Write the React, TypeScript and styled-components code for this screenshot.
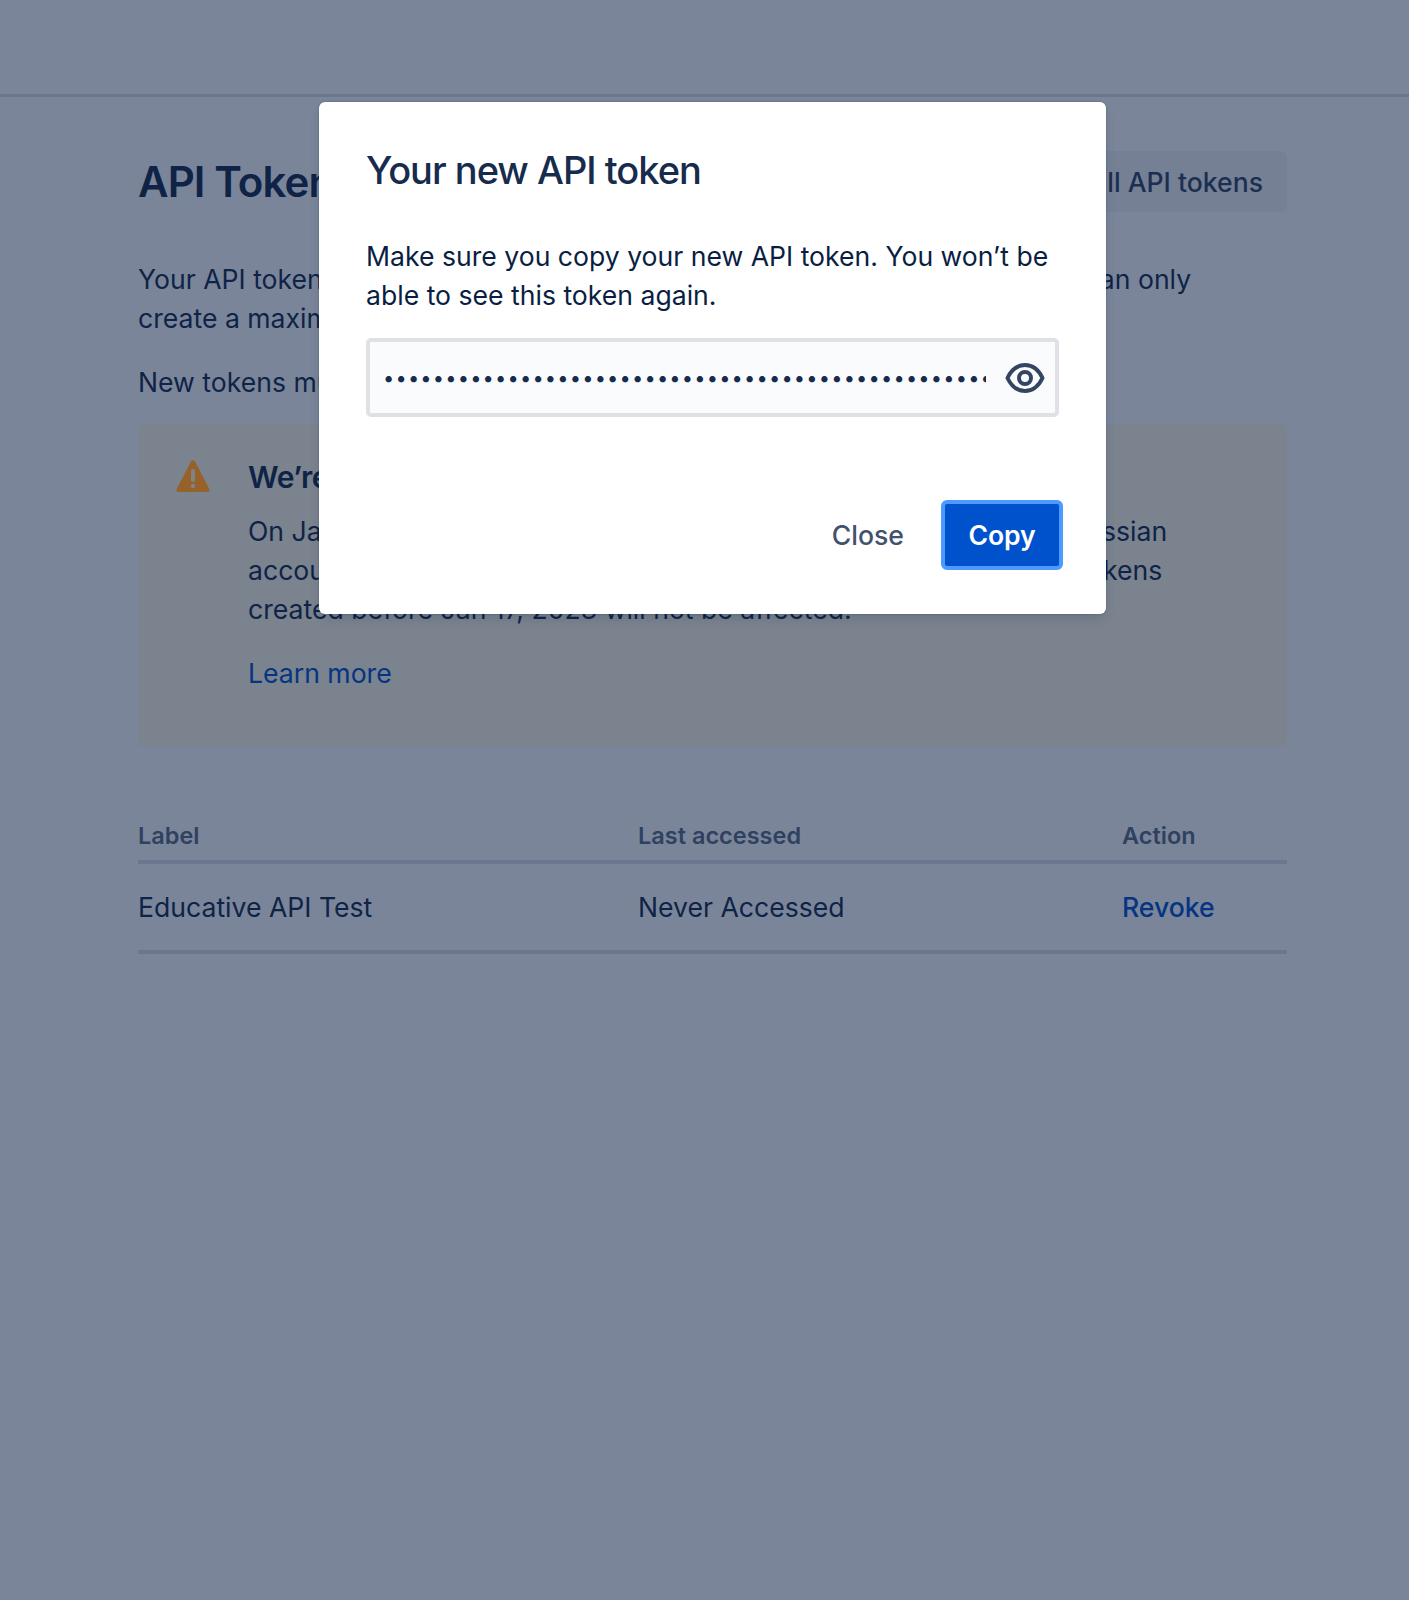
import React from "react";
import styled, { createGlobalStyle } from "styled-components";

const GlobalStyle = createGlobalStyle`
  html, body {
    margin: 0;
    padding: 0;
    background: #fff;
    font-family: Inter, "Liberation Sans", sans-serif;
    color: #172b4d;
  }
  * {
    box-sizing: border-box;
  }
  a {
    text-decoration: none;
  }
`;

const Page = styled.div`
  position: relative;
  width: 1409px;
  height: 1600px;
  overflow: hidden;
`;

const TopBar = styled.header`
  height: 97px;
  border-bottom: 3px solid #dfe1e6;
`;

const Main = styled.main`
  padding: 54px 122px 0 138px;
`;

const TitleRow = styled.div`
  display: flex;
  align-items: center;
  justify-content: space-between;
  height: 61px;
  margin-bottom: 48px;
`;

const Title = styled.h1`
  margin: 0;
  font-size: 42px;
  font-weight: 600;
  letter-spacing: -0.9px;
  color: #172b4d;
`;

const GhostButton = styled.button`
  height: 61px;
  padding: 0 24px;
  border: 0;
  border-radius: 6px;
  background: #f4f5f7;
  color: #344563;
  font: 500 26.6px Inter, "Liberation Sans", sans-serif;
`;

const Text = styled.p`
  margin: 0 0 25px;
  font-size: 26.6px;
  line-height: 39px;
  color: #172b4d;
`;

const Warning = styled.section`
  display: flex;
  gap: 38px;
  height: 323px;
  margin-top: -3px;
  padding: 35px 38px;
  border-radius: 6px;
  background: #fffae6;
`;

const WarningIcon = styled.svg`
  position: relative;
  z-index: 2;
  flex: none;
  width: 34px;
  height: 34px;
`;

const WarningBody = styled.div`
  flex: 1;
`;

const WarningTitle = styled.h2`
  margin: 0 0 17px;
  font-size: 30px;
  line-height: 36px;
  font-weight: 600;
  letter-spacing: -0.4px;
  color: #172b4d;
`;

const LinkText = styled.a<{ $strong?: boolean }>`
  font-size: 26.6px;
  line-height: 39px;
  font-weight: ${props => (props.$strong ? 500 : 400)};
  color: #0052cc;
`;

const Table = styled.div`
  margin-top: 65px;
`;

const Row = styled.div<{ $head?: boolean }>`
  display: grid;
  grid-template-columns: 500px 484px 1fr;
  align-items: center;
  height: ${props => (props.$head ? "52px" : "90px")};
  padding-bottom: ${props => (props.$head ? "2px" : "0")};
  border-bottom: 4px solid #dfe1e6;
  font-size: ${props => (props.$head ? "23.5px" : "26.6px")};
  font-weight: ${props => (props.$head ? 600 : 400)};
  color: ${props => (props.$head ? "#5e6c84" : "#172b4d")};
`;

const Blanket = styled.div`
  position: absolute;
  inset: 0;
  display: flex;
  align-items: flex-start;
  padding: 102px 0 0 319px;
  background: rgba(9, 30, 66, 0.54);
`;

const Modal = styled.div`
  display: flex;
  flex-direction: column;
  width: 787px;
  height: 512px;
  padding: 44px 44px 44px 47px;
  border-radius: 6px;
  background: #fff;
  box-shadow: 0 0 2px rgba(9, 30, 66, 0.31), 0 6px 14px -4px rgba(9, 30, 66, 0.2);
`;

const ModalTitle = styled.h2`
  margin: 0 0 43px;
  font-size: 38px;
  line-height: 48px;
  font-weight: 500;
  letter-spacing: -1px;
  color: #172b4d;
`;

const ModalText = styled.p`
  margin: 0 0 23px;
  width: 693px;
  font-size: 26.6px;
  line-height: 39px;
  color: #091e42;
`;

const TokenField = styled.div`
  display: flex;
  align-items: center;
  width: 693px;
  height: 79px;
  padding: 0 10px 0 13px;
  border: 4px solid #dfe1e6;
  border-radius: 5px;
  background: #fafbfc;
`;

const TokenInput = styled.input`
  flex: 1;
  min-width: 0;
  padding: 0;
  border: 0;
  outline: 0;
  background: transparent;
  color: #172b4d;
  font: 400 20px Inter, "Liberation Sans", sans-serif;
  letter-spacing: 1.2px;
`;

const EyeIcon = styled.svg`
  flex: none;
  width: 40px;
  height: 32px;
  margin-left: 19px;
`;

const Footer = styled.div`
  display: flex;
  align-items: center;
  justify-content: flex-end;
  gap: 37px;
  margin-top: auto;
  margin-right: -1px;
`;

const CloseButton = styled.button`
  padding: 0;
  border: 0;
  background: none;
  color: #42526e;
  font: 500 26.6px Inter, "Liberation Sans", sans-serif;
`;

const CopyButton = styled.button`
  width: 122px;
  height: 70px;
  border: 4px solid #4c9aff;
  border-radius: 6px;
  background: #0052cc;
  color: #fff;
  font: 600 26.6px Inter, "Liberation Sans", sans-serif;
  letter-spacing: -0.1px;
`;

const App: React.FC = () => (
  <Page>
    <GlobalStyle />
    <TopBar />
    <Main>
      <TitleRow>
        <Title>API Tokens</Title>
        <GhostButton>Revoke all API tokens</GhostButton>
      </TitleRow>
      <Text>
        Your API tokens need to be kept securely, as with any other password. You can only
        <br />
        create a maximum of 25 API tokens per account.
      </Text>
      <Text>New tokens must have a label that describes what they are used for.</Text>
      <Warning>
        <WarningIcon viewBox="0 0 34 34">
          <path
            d="M17 1.5c1 0 1.8.5 2.3 1.4l14 27c.8 1.6-.2 3.1-2 3.1H2.7c-1.8 0-2.8-1.5-2-3.1l14-27C15.2 2 16 1.5 17 1.5z"
            fill="#96622a"
          />
          <rect x="15" y="10" width="4" height="13" rx="2" fill="#7f8389" />
          <circle cx="17" cy="27" r="2.2" fill="#7f8389" />
        </WarningIcon>
        <WarningBody>
          <WarningTitle>We’re making changes to API tokens</WarningTitle>
          <Text>
            On Jan 17, 2023 we will start adopting newer limits to tokens for Atlassian
            <br />
            account holders, and all new tokens will expire after one year. API tokens
            <br />
            created before Jan 17, 2023 will not be affected.
          </Text>
          <LinkText href="#" onClick={e => e.preventDefault()}>
            Learn more
          </LinkText>
        </WarningBody>
      </Warning>
      <Table>
        <Row $head>
          <span>Label</span>
          <span>Last accessed</span>
          <span>Action</span>
        </Row>
        <Row>
          <span>Educative API Test</span>
          <span>Never Accessed</span>
          <LinkText href="#" $strong onClick={e => e.preventDefault()}>
            Revoke
          </LinkText>
        </Row>
      </Table>
    </Main>
    <Blanket>
      <Modal>
        <ModalTitle>Your new API token</ModalTitle>
        <ModalText>
          Make sure you copy your new API token. You won’t be able to see this token again.
        </ModalText>
        <TokenField>
          <TokenInput type="password" readOnly value={"x".repeat(80)} />
          <EyeIcon viewBox="0 0 40 32" fill="none" stroke="#344563" strokeWidth="4">
            <path d="M2.5 16C6.5 7.5 13 3 20 3s13.5 4.5 17.5 13C33.5 24.5 27 29 20 29S6.5 24.5 2.5 16z" strokeLinejoin="round" />
            <circle cx="20" cy="16" r="6" />
          </EyeIcon>
        </TokenField>
        <Footer>
          <CloseButton>Close</CloseButton>
          <CopyButton>Copy</CopyButton>
        </Footer>
      </Modal>
    </Blanket>
  </Page>
);

export default App;
